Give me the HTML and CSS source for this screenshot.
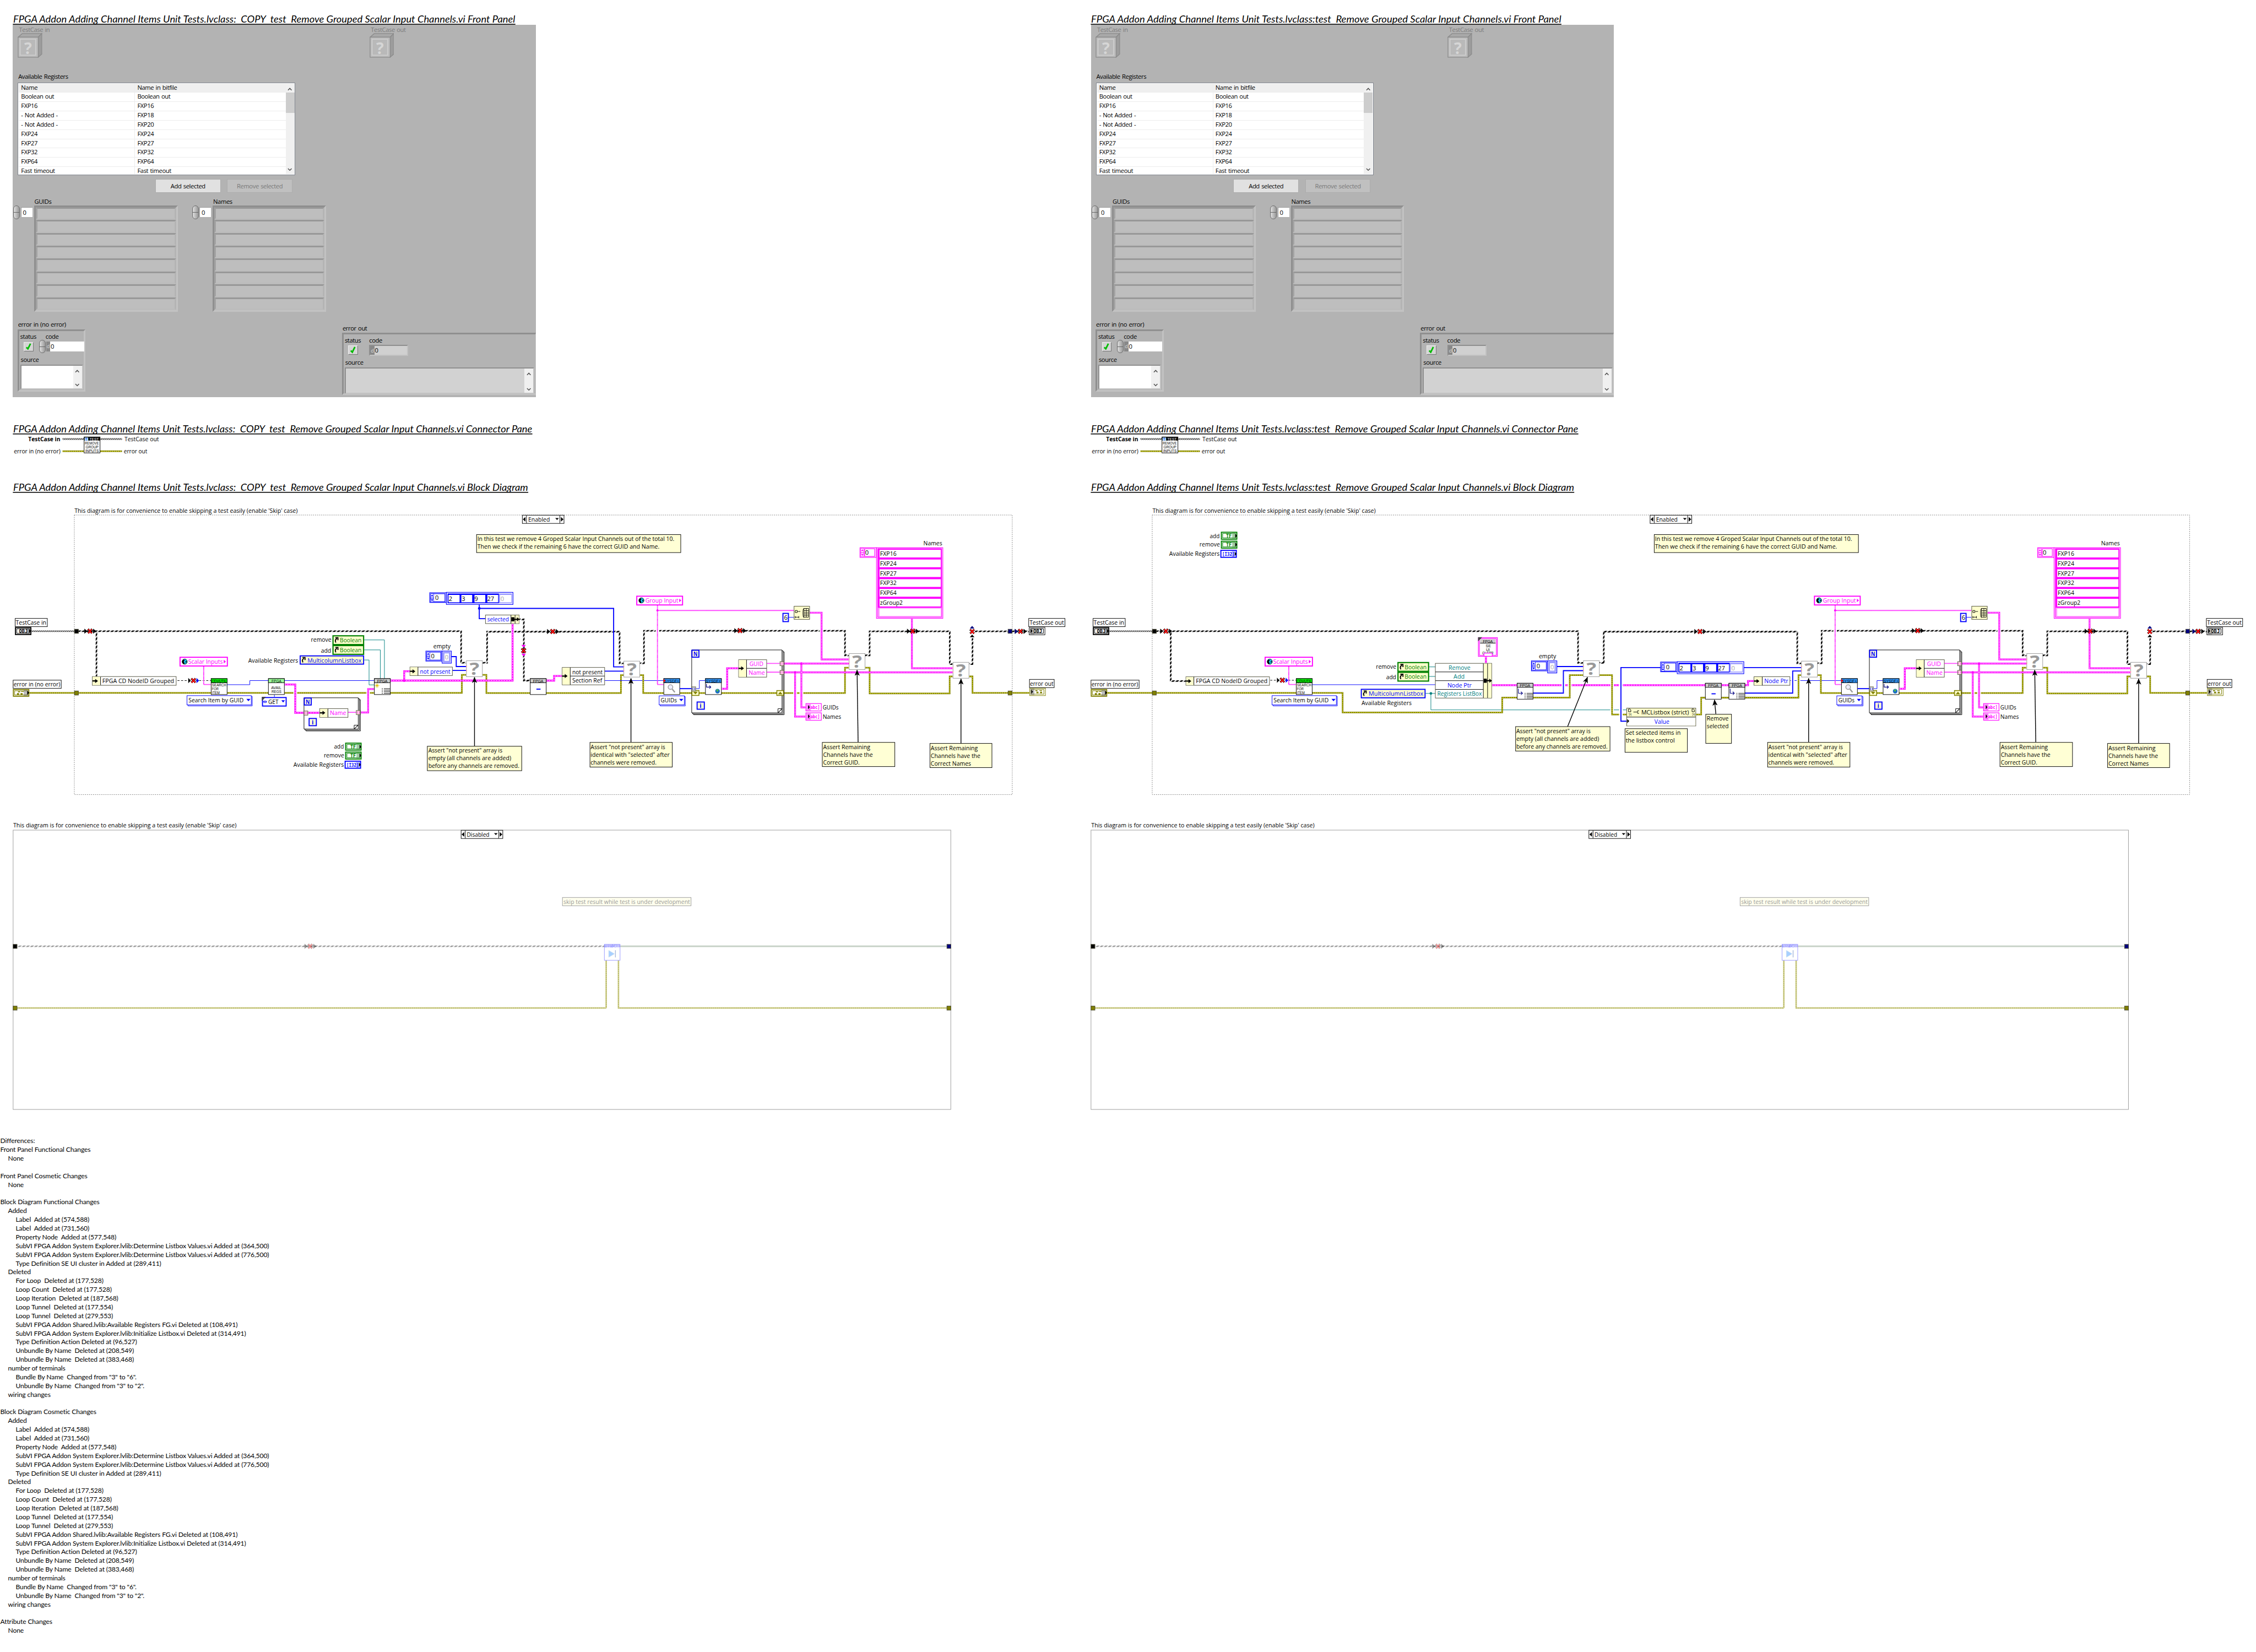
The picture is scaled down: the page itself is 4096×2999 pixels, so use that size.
FILE: index.html
```
<!DOCTYPE html>
<html lang="en">
<head>
<meta charset="utf-8">
<title>VI comparison report</title>
<link rel="stylesheet" href="styles.css">
</head>
<body>
<svg class="defs" width="0" height="0" aria-hidden="true">
  <defs>
    <pattern id="stripe" width="8" height="8" patternUnits="userSpaceOnUse"><path class="ink" d="M0 8L8 0H3L0 3zM3 8L8 3V8z"/></pattern>
    <pattern id="stripe-fine" width="4" height="4" patternUnits="userSpaceOnUse"><path class="ink" d="M0 4L4 0H2L0 2zM2 4L4 2V4z"/></pattern>
    <pattern id="stripe-off" width="8" height="8" patternUnits="userSpaceOnUse"><path class="off" d="M0 8L8 0H3L0 3zM3 8L8 3V8z"/></pattern>
    <marker id="head" viewBox="0 0 12 10" refX="11" refY="5" markerWidth="12" markerHeight="10" markerUnits="userSpaceOnUse" orient="auto"><path d="M0 0L12 5L0 10L3 5z"/></marker>

    <g id="x"><path class="x-edge" d="M-4-4L4 4M4-4L-4 4"/><path class="x-red" d="M-3.5-4L3.5 4M3.5-4L-3.5 4"/></g>
    <g id="coerce"><path class="ink" d="M-11-5L-5 0L-11 5zM6-5L12 0L6 5z"/><use href="#x"/></g>
    <g id="assert"><rect class="box grey-edge" x=".5" y=".5" width="31" height="31"/><text class="qmark" x="16" y="28" text-anchor="middle" textLength="19" lengthAdjust="spacingAndGlyphs">?</text><path class="salmon" d="M0 9q3 2 0 5zM0 17q3 2 0 5z"/></g>
    <g id="fpga"><rect class="box" x=".5" y=".5" width="31" height="31"/><rect class="hdr-grey" x=".5" y=".5" width="31" height="8"/><text class="px" x="6" y="7.6" textLength="20">FPGA</text></g>
    <g id="minus"><use href="#fpga"/><rect class="blue-fill" x="12.500" y="20" width="8" height="2"/></g>
    <g id="bars"><path class="ink-line" d="M15 20h2M19 20h12M15 23h2M19 23h12M15 26h2M19 26h12M15 29h2M19 29h12"/></g>
    <g id="values"><use href="#fpga"/><use href="#bars"/><path class="navy-line" d="M3 11v9h8M8 17l3 3l-3 3"/></g>
    <g id="sysdf"><rect class="box" x=".5" y=".5" width="31" height="31"/><rect class="hdr-blue" x=".5" y=".5" width="31" height="8"/><text class="px" x="1.500" y="7.600" textLength="29" lengthAdjust="spacingAndGlyphs">SYSDF+</text></g>
    <g id="globe"><circle class="globe" r="5"/><path class="ink" d="M-3-4q3 0 3 2l-2 2l2 3l-2 2q-5-3-1-9zM2-2l2 2l-2 3z"/></g>
    <g id="loop-n"><rect class="lbox" x="1" y="1" width="13.500" height="13.500"/><text class="bl b" x="3.800" y="12.300" textLength="8" lengthAdjust="spacingAndGlyphs">N</text></g>
    <g id="loop-i"><rect class="lbox" x="1" y="1" width="14" height="14"/><text class="bl b" x="6" y="12.800">i</text></g>
    <g id="arrow"><path class="ink" d="M0-1.200H5V-4L10.500 0L5 4V1.200H0z"/></g>
    <g id="pack"><path class="ink" d="M0-4h6v2.800H11V-4L16 0L11 4V1.200H6V4H0z"/></g>
    <g id="ref"><path class="ref-arrow" d="M3 12Q0 7 5 4M2 2.500h5v5"/></g>
    <g id="brackets"><rect class="tun" x=".5" y=".5" width="7.500" height="8"/><path class="tun-in" d="M3.500 2.500h-1v4h1M5.200 2.500h1v4h-1"/></g>
    <g id="step"><rect x="0" y="0" width="6" height="16" class="st"/><path d="M.5 5L3 1.500L5.500 5zM.5 11L3 14.500L5.500 11z" class="stp"/><path d="M0 7h6v.8H0zM0 8.600h6v.8H0z" class="stp"/></g>

    <g id="clusterTerm"><rect class="err-box" x="1" y="1" width="30" height="13"/><rect class="err-in" x="3.500" y="3.500" width="25" height="8"/><path class="olive" d="M8 8h4v3H8zM10 4.500h4v2h-4zM15 8h4v3h-4zM16 4.500h5v1h-5z"/></g>
    <g id="objTerm"><rect class="obj-box" x="1" y="1" width="30" height="13.500"/><rect class="obj-in" x="3.500" y="3.500" width="25" height="8.500"/><text class="mono" x="8" y="11.300" textLength="17" lengthAdjust="spacingAndGlyphs">OBJ</text></g>

    <g id="inputs">
      <rect class="box" x="29.500" y="1202.500" width="62.500" height="16"/><text class="t" x="30.500" y="1214.500" textLength="59.500" lengthAdjust="spacingAndGlyphs">TestCase in</text>
      <use href="#objTerm" x="29" y="1219.300"/><rect class="veil" x="50" y="1221" width="9" height="12"/><path class="ink" d="M56 1223l4 4l-4 4z"/>
      <rect class="box" x="25.500" y="1322.500" width="93.500" height="16"/><text class="t" x="26.500" y="1334.500" textLength="90.500" lengthAdjust="spacingAndGlyphs">error in (no error)</text>
      <use href="#clusterTerm" x="25" y="1339.700"/><rect class="veil" x="46" y="1341.500" width="9" height="12"/><path class="ink" d="M53 1343l4 4l-4 4z"/>
      <rect class="tunnel" x="144.800" y="1223.500" width="7.600" height="8"/><rect class="tunnel olive" x="144.800" y="1343.500" width="7.600" height="8"/>
    </g>

    <g id="search">
      <path class="str" d="M396 1296V1331H410"/>
      <rect class="gconst" x="350" y="1278" width="92" height="17"/><use href="#globe" x="359" y="1286.500"/><text class="t mg" x="366" y="1291" textLength="67" lengthAdjust="spacingAndGlyphs">Scalar Inputs</text><path class="mg" d="M435 1283l4 3.500l-4 3.500z"/>
      <rect class="box" x="410.500" y="1319.500" width="31" height="31"/><rect class="hdr-green" x="410.500" y="1319.500" width="31" height="8"/>
      <text class="px" x="411.500" y="1326.600" textLength="29" lengthAdjust="spacingAndGlyphs">CDVUTIL</text><text class="px" x="412" y="1334.600" textLength="28" lengthAdjust="spacingAndGlyphs">SEARCH</text><text class="px" x="412" y="1342.500" textLength="13" lengthAdjust="spacingAndGlyphs">FOR</text><text class="px" x="412" y="1350" textLength="15" lengthAdjust="spacingAndGlyphs">ITEM</text>
      <path class="ring-shadow" d="M488.500 1354h1.800v18.500H365.500V1371"/><rect class="ring" x="363.500" y="1352.600" width="125" height="18"/><text class="t" x="366.500" y="1366" textLength="107" lengthAdjust="spacingAndGlyphs">Search Item by GUID</text><path class="blue-fill" d="M479 1359h8l-4 4.500z"/>
    </g>

    <g id="terminals">
      <text class="t" x="649.500" y="1456" textLength="19" lengthAdjust="spacingAndGlyphs">add</text><text class="t" x="629.500" y="1473" textLength="39.500" lengthAdjust="spacingAndGlyphs">remove</text><text class="t" x="570.500" y="1491" textLength="98" lengthAdjust="spacingAndGlyphs">Available Registers</text>
      <rect class="tf" x="672" y="1445" width="30" height="13.500"/><rect class="tf-in" x="674.500" y="1447.500" width="25" height="8.500"/><text class="mono gr" x="681" y="1455.300" textLength="11" lengthAdjust="spacingAndGlyphs">TF</text><rect class="tf-veil" x="693" y="1446" width="8" height="12"/><path class="ink" d="M699 1448l3.500 4l-3.500 4z"/>
      <rect class="tf" x="672" y="1462.300" width="30" height="13.500"/><rect class="tf-in" x="674.500" y="1464.800" width="25" height="8.500"/><text class="mono gr" x="681" y="1472.600" textLength="11" lengthAdjust="spacingAndGlyphs">TF</text><rect class="tf-veil" x="693" y="1463.300" width="8" height="12"/><path class="ink" d="M699 1465l3.500 4l-3.500 4z"/>
      <rect class="lbox white" x="671" y="1480" width="30" height="13.700"/><rect class="i-veil" x="692" y="1481" width="8" height="12"/><text class="mono bl" x="673.500" y="1490.500" textLength="24" lengthAdjust="spacingAndGlyphs">[I32]</text><path class="ink" d="M698 1483l3.500 4l-3.500 4z"/>
    </g>

    <g id="empty">
      <text class="t" x="842.500" y="1260.700" textLength="33.500" lengthAdjust="spacingAndGlyphs">empty</text>
      <rect class="a-out" x="828" y="1266" width="31" height="19.500"/><rect class="a-out" x="830.500" y="1268" width="26.500" height="15.500"/><use href="#step" x="829.500" y="1268"/><text class="t" x="838" y="1280">0</text>
      <rect class="a-out" x="859.500" y="1266" width="18" height="23.500"/><rect class="a-dim" x="862.500" y="1269" width="12" height="17.500"/><text class="t dim" x="865" y="1282">0</text>
    </g>

    <g id="indices">
      <rect class="a-out" x="835.500" y="1152.500" width="32" height="19"/><rect class="a-out" x="838" y="1154.500" width="27" height="15.500"/><use href="#step" x="837" y="1154.500"/><text class="t" x="846" y="1166.500">0</text>
      <rect class="a-out" x="867.800" y="1151.800" width="129.500" height="23.500"/><rect class="a-band" x="870" y="1154" width="100" height="19"/><rect class="a-dimband" x="970" y="1154" width="25.500" height="19"/>
      <path class="white" d="M872 1156.700h21.500v14.600H872zM897 1156.700h21v14.600h-21zM922.500 1156.700h21v14.600h-21zM947.500 1156.700h21v14.600h-21zM972 1156.700h22v14.600h-22z"/>
      <text class="t" x="872.500" y="1168.500">2</text><text class="t" x="897.500" y="1168.500">3</text><text class="t" x="922.500" y="1168.500">9</text><text class="t" x="947.500" y="1168.500" textLength="13" lengthAdjust="spacingAndGlyphs">27</text><text class="t dim" x="973" y="1168.500">0</text>
    </g>

    <!-- Reads the remaining items back and asserts on their GUIDs and names -->
    <g id="verify">
      <path id="v-class" class="w-class" d="M1204.600 1228V1289.700H1212M1244 1289.700H1252V1226.500H1642.800V1274.300H1650M1682 1274.300H1690.700V1227.700H1846.500V1291.300H1852M1884 1291.300H1890.700V1227.700H2001"/>
      <path id="v-err" class="w-err" d="M1244 1312.700H1250.500V1347.500H1642.800V1298.300H1650M1682 1298.300H1690.700V1348.300H1846.300V1315.300H1852M1884 1315.300H1890.700V1347.300H2001"/><use href="#v-err" class="over-err"/>
      <path class="gap" d="M1597.300 1222V1231M1558 1343V1352M1545.800 1343V1352M1278.200 1222V1231"/>
      <path class="str" d="M1278.200 1177V1331H1290M1278.200 1187H1543"/><circle class="mgc" cx="1278.200" cy="1187" r="2"/>
      <path id="v-arr" class="w-arr" d="M1574 1191.300H1597.300V1282.300H1650M1524 1290.300H1650M1524 1307.300H1852M1558 1290V1375.300H1566M1545.800 1307V1393.300H1566M1772.900 1203V1299.300H1852"/><use href="#v-arr" class="over-arr"/>
      <circle class="mgc" cx="1558" cy="1290.300" r="2.500"/><circle class="mgc" cx="1545.800" cy="1307.300" r="2.500"/>
      <use href="#coerce" x="1438.700" y="1226.300"/><use href="#coerce" x="1774.400" y="1227.300"/><use href="#coerce" x="1984" y="1227.700"/><path class="navy" d="M1973 1223l6 4.700l-6 4.700z"/>
      <rect class="white" x="1886" y="1215" width="9" height="26"/><use href="#x" x="1890" y="1228"/><path class="navy" d="M1885.500 1222l4.500-5l4.500 5z"/><path class="ink" d="M1885.500 1239l4.500-5l4.500 5z"/>
      <rect class="tunnel navy" x="1959.900" y="1223.500" width="7.600" height="8"/><rect class="tunnel olive" x="1959.900" y="1343.500" width="7.600" height="8"/>

      <rect class="gconst" x="1238" y="1159.300" width="89" height="17"/><use href="#globe" x="1247" y="1167.500"/><text class="t mg" x="1254.600" y="1172.300" textLength="64" lengthAdjust="spacingAndGlyphs">Group Input</text><path class="mg" d="M1320.500 1164l4 3.500l-4 3.500z"/>
      <rect class="lbox white" x="1522.200" y="1192.700" width="10.600" height="16"/><text class="t" x="1524.300" y="1205">6</text><path class="blue" d="M1533.500 1200.300H1543"/>
      <rect class="node" x="1543.800" y="1178.800" width="30.200" height="25.500"/><path class="ink-line" d="M1546 1187h4v4h-4zM1551 1189h5M1546 1198v4M1546 1200h7M1553 1198v4M1563 1183q-2 0-2 9t2 9M1563 1183h9v17h-9zM1567.500 1183v17M1563 1187.500h9M1563 1192h9M1563 1196h9"/>

      <use href="#assert" x="1212.300" y="1285"/><use href="#assert" x="1650.300" y="1270.300"/><use href="#assert" x="1852.300" y="1287.300"/>

      <use href="#sysdf" x="1290" y="1319"/><circle class="lens" cx="1303.500" cy="1336" r="4.500"/><path class="handle" d="M1307 1340l5 6"/><path class="red" d="M1290 1320l4 3.500l-4 3.500z"/>
      <path class="ring-shadow" d="M1330.500 1354.500h1.800v18H1283.500V1371"/><rect class="ring" x="1281.500" y="1353" width="49" height="17.500"/><text class="t" x="1284.500" y="1366" textLength="31.500" lengthAdjust="spacingAndGlyphs">GUIDs</text><path class="blue-fill" d="M1320.500 1359h8l-4 4.500z"/>

      <path class="ink-line" d="M1344.800 1263.800H1520.300V1386H1344.800zM1520.300 1265.500h2.200V1388H1346.500v-2M1522.500 1267.500h2V1389.700H1348.500v-1.700M1512.500 1386V1378h7.800zM1520.300 1378l-7.800 8"/>
      <path class="blue thick" d="M1321.500 1339H1345"/><path class="blue" d="M1353 1339H1359.600V1323.300H1371"/>
      <use href="#loop-n" x="1344.300" y="1263.300"/><use href="#loop-i" x="1354.300" y="1364"/>
      <rect class="shift" x="1345.300" y="1342.700" width="13.600" height="9.500"/><path class="olive" d="M1347.500 1345h9l-4.500 5z"/>
      <rect class="shift" x="1510.300" y="1342.700" width="13" height="9.500"/><path class="olive" d="M1512.500 1350h9l-4.500-5z"/>
      <use href="#brackets" class="bl" x="1344.500" y="1335"/>
      <use href="#sysdf" x="1371" y="1319"/><path class="navy-line" d="M1373.500 1330v6h8M1379 1333l3 3l-3 3"/><circle class="earth" cx="1395" cy="1344" r="4.500"/><path class="land" d="M1393 1341q3-2 4 1l-2 3q-3-1-2-4z"/>
      <path id="v-clu" class="w-clu" d="M1403 1339.300H1413.700V1299.300H1436"/><use href="#v-clu" class="over-clu"/>
      <rect class="box olive-edge" x="1436" y="1282.800" width="54.500" height="33.800"/><rect class="cap" x="1436.500" y="1283.300" width="14.500" height="32.800"/><path class="ink-line" d="M1451.400 1283v33.500M1451.400 1299.500h39"/><use href="#arrow" x="1436" y="1299.500"/>
      <text class="t mg" x="1457" y="1295" textLength="27" lengthAdjust="spacingAndGlyphs">GUID</text><text class="t mg" x="1455.500" y="1312" textLength="31.500" lengthAdjust="spacingAndGlyphs">Name</text>
      <path class="str" d="M1491 1290H1516M1491 1307H1516"/><use href="#brackets" class="mgs" x="1516" y="1286"/><use href="#brackets" class="mgs" x="1516" y="1303"/>

      <rect class="abc" x="1566.800" y="1368" width="30" height="14.400"/><rect class="mg-veil" x="1567.500" y="1369" width="9" height="12.500"/><text class="mono mg" x="1571" y="1379" textLength="23" lengthAdjust="spacingAndGlyphs">[abc]</text><path class="ink" d="M1571 1371l3.500 4l-3.500 4z"/><text class="t" x="1599.400" y="1380" textLength="31" lengthAdjust="spacingAndGlyphs">GUIDs</text>
      <rect class="abc" x="1566.800" y="1386" width="30" height="14.400"/><rect class="mg-veil" x="1567.500" y="1387" width="9" height="12.500"/><text class="mono mg" x="1571" y="1397" textLength="23" lengthAdjust="spacingAndGlyphs">[abc]</text><path class="ink" d="M1571 1389l3.500 4l-3.500 4z"/><text class="t" x="1599.400" y="1397.300" textLength="36" lengthAdjust="spacingAndGlyphs">Names</text>

      <text class="t" x="1795.300" y="1060" textLength="36.500" lengthAdjust="spacingAndGlyphs">Names</text>
      <rect class="s-out" x="1672" y="1065" width="31.500" height="19"/><rect class="s-out" x="1681" y="1067" width="19.500" height="15"/><g class="pink-step"><use href="#step" x="1673.500" y="1066.500"/></g><text class="t" x="1682" y="1079">0</text>
      <rect class="s-out" x="1704" y="1065" width="129" height="137.300"/><rect class="mg" x="1705.800" y="1066.300" width="125.500" height="115"/><rect class="s-dim" x="1706.300" y="1181.300" width="124.500" height="19"/>
      <path class="white" d="M1710 1069h119v15H1710zM1710 1088h119v15H1710zM1710 1107.100h119v15H1710zM1710 1126.200h119v15H1710zM1710 1145.300h119v15H1710zM1710 1164.300h119v15H1710zM1710 1183.300h119v14.500H1710z"/>
      <text class="t" x="1711" y="1081" textLength="32" lengthAdjust="spacingAndGlyphs">FXP16</text><text class="t" x="1711" y="1100" textLength="32" lengthAdjust="spacingAndGlyphs">FXP24</text><text class="t" x="1711" y="1119" textLength="32" lengthAdjust="spacingAndGlyphs">FXP27</text><text class="t" x="1711" y="1138" textLength="32" lengthAdjust="spacingAndGlyphs">FXP32</text><text class="t" x="1711" y="1157" textLength="32" lengthAdjust="spacingAndGlyphs">FXP64</text><text class="t" x="1711" y="1176.300" textLength="44" lengthAdjust="spacingAndGlyphs">zGroup2</text>

      <rect class="box" x="2000" y="1202.500" width="70.500" height="16"/><text class="t" x="2001.500" y="1214.500" textLength="67" lengthAdjust="spacingAndGlyphs">TestCase out</text>
      <rect class="box" x="2001" y="1220" width="30.500" height="14.400"/><rect class="obj-in" x="2004" y="1222.700" width="24.500" height="8.800"/><text class="mono" x="2009" y="1230.800" textLength="17" lengthAdjust="spacingAndGlyphs">OBJ</text><rect class="veil" x="2002" y="1221" width="9" height="12.500"/><path class="ink" d="M2004 1223l3.500 4l-3.500 4z"/>
      <rect class="box" x="2001.500" y="1321" width="48" height="16"/><text class="t" x="2002.500" y="1333" textLength="45.500" lengthAdjust="spacingAndGlyphs">error out</text>
      <rect class="err-in" x="2002" y="1338.200" width="30.500" height="14.300"/><rect class="err-in" x="2004.500" y="1340.700" width="25" height="9"/><path class="olive" d="M2015 1345h4v3h-4zM2013 1342h4v2h-4zM2022 1345h4v3h-4zM2021 1342h5v1.500h-5z"/><rect class="veil" x="2003" y="1339" width="8" height="12.500"/><path class="ink" d="M2005 1341l3.500 4l-3.500 4z"/>

      <rect class="note" x="926.500" y="1039.500" width="397" height="35"/><text class="t" x="928" y="1052" textLength="383" lengthAdjust="spacingAndGlyphs">In this test we remove 4 Groped Scalar Input Channels out of the total 10.</text><text class="t" x="928" y="1067" textLength="354" lengthAdjust="spacingAndGlyphs">Then we check if the remaining 6 have the correct GUID and Name.</text>
      <rect class="note" x="1147" y="1443.500" width="160" height="48"/><text class="t" x="1148.300" y="1456.300" textLength="145" lengthAdjust="spacingAndGlyphs">Assert "not present" array is</text><text class="t" x="1148.300" y="1471.300" textLength="153.500" lengthAdjust="spacingAndGlyphs">identical with "selected" after</text><text class="t" x="1148.300" y="1486.300" textLength="128" lengthAdjust="spacingAndGlyphs">channels were removed.</text>
      <path class="lead" d="M1226.700 1443V1319"/>
      <rect class="note" x="1598.700" y="1443.500" width="141" height="47"/><text class="t" x="1600.300" y="1456.300" textLength="91.500" lengthAdjust="spacingAndGlyphs">Assert Remaining</text><text class="t" x="1600.300" y="1471.300" textLength="96.500" lengthAdjust="spacingAndGlyphs">Channels have the</text><text class="t" x="1600.300" y="1486.300" textLength="71" lengthAdjust="spacingAndGlyphs">Correct GUID.</text>
      <path class="lead" d="M1668.300 1443L1666.300 1303"/>
      <rect class="note" x="1808" y="1445.500" width="120.500" height="47"/><text class="t" x="1809.500" y="1458.300" textLength="91.500" lengthAdjust="spacingAndGlyphs">Assert Remaining</text><text class="t" x="1809.500" y="1473.300" textLength="96.500" lengthAdjust="spacingAndGlyphs">Channels have the</text><text class="t" x="1809.500" y="1488.300" textLength="78.500" lengthAdjust="spacingAndGlyphs">Correct Names</text>
      <path class="lead" d="M1868.300 1445V1320"/>
    </g>

    <g id="selector"><rect class="box" x="-40.500" y=".5" width="81" height="16"/><path class="ink-line" d="M-32.500 1v15M32.500 1v15"/><path class="ink" d="M-34.500 4v9l-5-4.500zM34.500 4v9l5-4.500zM23.500 6h7l-3.500 4z"/></g>

    <!-- Right-hand end of the case that is switched off -->
    <g id="skipped">
      <rect class="note faded" x="1093.500" y="1744.500" width="250" height="16"/><text class="t faint" x="1095.500" y="1756.500" textLength="246" lengthAdjust="spacingAndGlyphs">skip test result while test is under development</text>
      <path class="off-obj" d="M1205.500 1839.300H1841"/><path class="off-core" d="M1205.500 1839.300H1841"/>
      <path id="s-err" class="w-off" d="M1178.500 1867V1959.300M1202.400 1867V1959.300H1841"/><use href="#s-err" class="over-off"/>
      <rect class="skip-edge" x="1175" y="1835.500" width="30.500" height="31"/><rect class="skip-hdr" x="1175" y="1835.500" width="30.500" height="6"/><text class="px wh" x="1176" y="1841.500" textLength="29" lengthAdjust="spacingAndGlyphs">TEST CASE</text>
      <path class="skip-play" d="M1183.500 1847.500v13l11-6.500z"/><path class="skip-bar" d="M1196.500 1847v14"/>
      <rect class="tunnel navy" x="1841" y="1835.500" width="7.600" height="8"/><rect class="tunnel olive" x="1841" y="1955.500" width="7.600" height="8"/>
    </g>

    <g id="pane">
      <text class="t b" x="54.800" y="857.300" textLength="62.500" lengthAdjust="spacingAndGlyphs">TestCase in</text><text class="t" x="242" y="857.300" textLength="67" lengthAdjust="spacingAndGlyphs">TestCase out</text>
      <text class="t" x="27" y="881.700" textLength="90.500" lengthAdjust="spacingAndGlyphs">error in (no error)</text><text class="t" x="240.700" y="881.700" textLength="45.500" lengthAdjust="spacingAndGlyphs">error out</text>
      <path class="w-fine" d="M121.500 853.500H237.300"/><path id="p-err" class="w-err" d="M121.500 877.300H237.300"/><use href="#p-err" class="over-err"/>
      <rect class="box" x="163.500" y="849.500" width="31" height="31"/><rect class="ink" x="163.500" y="849.500" width="31" height="7"/><rect class="sky" x="164.500" y="850.500" width="7" height="6"/><text class="px bl" x="165.500" y="856.500">T</text><text class="px wh" x="174" y="856.200" textLength="18" lengthAdjust="spacingAndGlyphs">TEST</text>
      <text class="px" x="165" y="864.700" textLength="27" lengthAdjust="spacingAndGlyphs">REMOVE</text><text class="px" x="166.500" y="871.700" textLength="25" lengthAdjust="spacingAndGlyphs">GROUP</text><text class="px" x="166" y="878.800" textLength="26" lengthAdjust="spacingAndGlyphs">INPUTS</text>
    </g>
  </defs>
</svg>

<main class="report">
  <div class="columns">
    <section class="vi vi-copy">
      <h2 class="title first"><svg width="1090" height="34"><text x="25.700" y="28.800" textLength="976" lengthAdjust="spacingAndGlyphs">FPGA Addon Adding Channel Items Unit Tests.lvclass:  COPY  test  Remove Grouped Scalar Input Channels.vi Front Panel</text><rect x="25" y="31.300" width="977" height="1.700"/></svg></h2>
      <div class="panel">
        <div class="obj obj-in-p"><span class="cap-t">TestCase in</span><svg class="cube" width="48" height="48"><path class="cube-top" d="M1 8L9 1H47L40 8z"/><path class="cube-side" d="M40 8L47 1V41L40 47z"/><rect class="cube-face" x="1" y="8" width="39" height="39"/><rect class="cube-in" x="5" y="12" width="30" height="31"/><text x="20" y="41" text-anchor="middle">?</text></svg></div>
        <div class="obj obj-out-p"><span class="cap-t">TestCase out</span><svg class="cube" width="48" height="48"><path class="cube-top" d="M1 8L9 1H47L40 8z"/><path class="cube-side" d="M40 8L47 1V41L40 47z"/><rect class="cube-face" x="1" y="8" width="39" height="39"/><rect class="cube-in" x="5" y="12" width="30" height="31"/><text x="20" y="41" text-anchor="middle">?</text></svg></div>
        <div class="registers"><span class="lab">Available Registers</span>
          <div class="listbox"><div class="rows"><div class="row head"><span>Name</span><span>Name in bitfile</span></div><div class="row"><span>Boolean out</span><span>Boolean out</span></div><div class="row"><span>FXP16</span><span>FXP16</span></div><div class="row"><span>- Not Added -</span><span>FXP18</span></div><div class="row"><span>- Not Added -</span><span>FXP20</span></div><div class="row"><span>FXP24</span><span>FXP24</span></div><div class="row"><span>FXP27</span><span>FXP27</span></div><div class="row"><span>FXP32</span><span>FXP32</span></div><div class="row"><span>FXP64</span><span>FXP64</span></div><div class="row"><span>Fast timeout</span><span>Fast timeout</span></div></div>
            <div class="scroll"><svg width="9" height="6"><path d="M1 5L4.500 1.500L8 5"/></svg><i class="thumb"></i><svg width="9" height="6"><path d="M1 1L4.500 4.500L8 1"/></svg></div></div>
          <div class="buttons"><span class="btn">Add selected</span><span class="btn off-btn">Remove selected</span></div>
        </div>
        <div class="array guids"><span class="lab">GUIDs</span><div class="arr"><i class="spin"></i><span class="num">0</span><div class="cells"><i></i><i></i><i></i><i></i><i></i><i></i><i></i><i></i></div></div></div>
        <div class="array names"><span class="lab">Names</span><div class="arr"><i class="spin"></i><span class="num">0</span><div class="cells"><i></i><i></i><i></i><i></i><i></i><i></i><i></i><i></i></div></div></div>
        <div class="error err-in-p"><span class="lab">error in (no error)</span><div class="cluster"><div class="pair"><div><span class="lab">status</span><b class="led"><svg width="12" height="13"><path d="M2 8l3 3L10 1"/></svg></b></div><div class="code"><span class="lab">code</span><div class="numrow"><i class="spin"></i><span class="radix">d</span><span class="num">0</span></div></div></div><span class="lab src">source</span><div class="area"><div class="scroll"><svg width="9" height="6"><path d="M1 5L4.500 1.500L8 5"/></svg><svg width="9" height="6"><path d="M1 1L4.500 4.500L8 1"/></svg></div></div></div></div>
        <div class="error err-out-p"><span class="lab">error out</span><div class="cluster"><div class="pair"><div><span class="lab">status</span><b class="led"><svg width="12" height="13"><path d="M2 8l3 3L10 1"/></svg></b></div><div class="code"><span class="lab">code</span><div class="numrow"><span class="radix">d</span><span class="num">0</span></div></div></div><span class="lab src">source</span><div class="area"><div class="scroll"><svg width="9" height="6"><path d="M1 5L4.500 1.500L8 5"/></svg><svg width="9" height="6"><path d="M1 1L4.500 4.500L8 1"/></svg></div></div></div></div>
      </div>
      <h2 class="title second"><svg width="1090" height="34"><text x="25.700" y="29.300" textLength="1009" lengthAdjust="spacingAndGlyphs">FPGA Addon Adding Channel Items Unit Tests.lvclass:  COPY  test  Remove Grouped Scalar Input Channels.vi Connector Pane</text><rect x="25" y="31" width="1010" height="1.700"/></svg></h2>
      <svg class="drawing" width="400" height="44" viewBox="0 846 400 44"><use href="#pane"/></svg>
      <h2 class="title third"><svg width="1090" height="34"><text x="25.700" y="29.300" textLength="1001" lengthAdjust="spacingAndGlyphs">FPGA Addon Adding Channel Items Unit Tests.lvclass:  COPY  test  Remove Grouped Scalar Input Channels.vi Block Diagram</text><rect x="25" y="31" width="1002" height="1.700"/></svg></h2>

      <svg class="drawing" width="2096" height="601.300" viewBox="0 958.700 2096 601.300">
        <text class="t" x="144.700" y="997" textLength="434" lengthAdjust="spacingAndGlyphs">This diagram is for convenience to enable skipping a test easily (enable 'Skip' case)</text>
        <rect class="frame" x="144.500" y="1001.500" width="1823.500" height="543.500"/>
        <use href="#selector" x="1056" y="1001.300"/><text class="t" x="1027" y="1014" textLength="42" lengthAdjust="spacingAndGlyphs">Enabled</text>
        <path class="w-fine" d="M61 1227.300H145"/>
        <path class="w-class" d="M152 1227.300H896.500V1288.700H906M187.500 1227V1315M938 1288.700H947V1228.300H1204.600M1009.500 1204.300H1018.400V1323.300H1030.500"/>
        <path id="l-err" class="w-err" d="M57 1347.300H897.900V1312.300H906M938 1312.300H945.600V1347.500H1207.200V1312.700H1212"/><use href="#l-err" class="over-err"/>
        <path class="dash" d="M345 1323.300H410"/>
        <path class="gap" d="M574 1343V1352M717.500 1319V1328M715.700 1343V1352M996.500 1223V1233"/>
        <path class="blue" d="M442 1331.300H485.700V1323.300H727M533.500 1351V1355M1175.500 1323.300H1290"/>
        <path id="l-clu" class="w-clu" d="M553 1331H574V1386H621M759 1323.300H996.500V1212M785.800 1323V1305.300H797M1062 1323.300H1077.300V1314.300H1092"/><use href="#l-clu" class="over-clu"/><circle class="mgc" cx="785.800" cy="1323.500" r="2.500"/>
        <path id="l-arr" class="w-arr" d="M701 1385.300H715.700V1339.700H727"/><use href="#l-arr" class="over-arr"/>
        <path class="str" d="M677 1385H692.500"/>
        <path class="teal" d="M708 1244.300H747.400V1320M708 1263.700H739.400V1320M708 1283.300H717.500V1331.700H727.500"/>
        <path class="blue thick" d="M879.600 1303.700H906.500M877.800 1276.700H887V1296H906.500M931.800 1175V1203H943.500M931.800 1183H1193V1296.700H1212.500M1175.500 1305H1212.500"/><circle class="blue-fill" cx="931.800" cy="1183" r="2.600"/>
        <use href="#inputs"/>
        <use href="#verify"/>
        <use href="#search"/>
        <use href="#terminals"/>
        <use href="#empty"/>
        <use href="#indices"/>
        <use href="#coerce" x="175" y="1227.300"/><use href="#coerce" x="1074.600" y="1228"/><use href="#x" x="376" y="1323.300"/><path class="ink" d="M366 1318.300l5 5l-5 5z"/><path class="blue-fill" d="M382 1318.300l5 5l-5 5z"/>
        <use href="#x" x="1018" y="1265"/><path class="mg" d="M1013.500 1254h9l-4.500 5zM1013.500 1271h9l-4.500 5z"/>
        <rect class="box olive-edge" x="179.500" y="1315.500" width="163" height="17"/><rect class="cap" x="180" y="1316" width="15.500" height="16"/><path class="ink-line" d="M195.500 1316v16"/><use href="#arrow" x="180" y="1324"/><text class="t" x="199" y="1328.500" textLength="139.500" lengthAdjust="spacingAndGlyphs">FPGA CD NodeID Grouped</text>
        <rect class="box" x="521.800" y="1319.500" width="31" height="31"/><rect class="hdr-mint" x="521.800" y="1319.500" width="31" height="8"/><text class="px" x="528" y="1326.800" textLength="19" lengthAdjust="spacingAndGlyphs">FPGA</text><text class="px" x="527" y="1339.500" textLength="20" lengthAdjust="spacingAndGlyphs">AVAIL</text><text class="px" x="528" y="1347.500" textLength="19" lengthAdjust="spacingAndGlyphs">REGS</text>
        <rect class="lbox white" x="510.300" y="1356.300" width="46" height="16.500"/><path class="dark" d="M509 1355h8l-8 8z"/><path class="blue-fill" d="M511.500 1364.500l3-3v6zM519 1364.500l-3-3v6z"/><text class="t" x="521.400" y="1369" textLength="20" lengthAdjust="spacingAndGlyphs">GET</text><path class="blue-fill" d="M547 1361.500h7l-3.500 4.500z"/>
        <path class="ink-line" d="M591 1356.800H696.500V1417.500H591zM696.500 1358.500h2.200V1419.500H593v-2M698.700 1360.500h2V1421.300H595v-1.700M688.500 1417.500V1410h8zM696.500 1410l-8 7.500"/>
        <use href="#loop-n" x="590.600" y="1356.300"/><use href="#loop-i" x="600" y="1396"/><use href="#brackets" class="mgs" x="590.500" y="1382"/><use href="#brackets" class="mgs" x="692.200" y="1381"/>
        <rect class="box olive-edge" x="621.500" y="1377.800" width="55" height="17"/><rect class="cap" x="622" y="1378.300" width="15.500" height="16"/><path class="ink-line" d="M637.500 1378v16.500"/><use href="#arrow" x="622" y="1386"/><text class="t mg" x="641.500" y="1390.500" textLength="31.500" lengthAdjust="spacingAndGlyphs">Name</text>
        <rect class="refbox gr-edge" x="647.400" y="1236.300" width="59.500" height="17"/><use href="#ref" x="650" y="1237.500"/><text class="t gr" x="660.700" y="1249" textLength="42" lengthAdjust="spacingAndGlyphs">Boolean</text>
        <rect class="refbox gr-edge" x="647.400" y="1255.300" width="59.500" height="17"/><use href="#ref" x="650" y="1256.500"/><text class="t gr" x="660.700" y="1268" textLength="42" lengthAdjust="spacingAndGlyphs">Boolean</text>
        <rect class="refbox" x="583.600" y="1275.300" width="123.300" height="16"/><use href="#ref" x="586" y="1276"/><text class="t bl" x="597.800" y="1288" textLength="105" lengthAdjust="spacingAndGlyphs">MulticolumnListbox</text>
        <text class="t" x="604.500" y="1248" textLength="39.700" lengthAdjust="spacingAndGlyphs">remove</text><text class="t" x="624" y="1269" textLength="19.700" lengthAdjust="spacingAndGlyphs">add</text><text class="t" x="482.600" y="1289" textLength="97" lengthAdjust="spacingAndGlyphs">Available Registers</text>
        <use href="#fpga" x="727.300" y="1319"/><use href="#bars" x="727.300" y="1319"/><path class="spark" d="M728.500 1333h9M733 1328.500v9M730 1330l6 6M736 1330l-6 6"/>
        <rect class="box olive-edge" x="797" y="1297" width="82.500" height="16.500"/><rect class="cap" x="797.500" y="1297.500" width="15" height="15.500"/><path class="ink-line" d="M812.600 1297v16.500"/><use href="#arrow" x="797" y="1305.300"/><text class="t bl" x="816.600" y="1309.500" textLength="59" lengthAdjust="spacingAndGlyphs">not present</text>
        <use href="#assert" x="906.300" y="1284.300"/>
        <rect class="box olive-edge" x="943.800" y="1195.800" width="65.500" height="16.700"/><rect class="cap" x="993.500" y="1196.300" width="15.500" height="15.700"/><path class="ink-line" d="M993.400 1196v16.500M1001.400 1196v16.500"/><use href="#pack" x="994" y="1204.300"/><text class="t bl" x="947.400" y="1208.500" textLength="42" lengthAdjust="spacingAndGlyphs">selected</text>
        <use href="#minus" x="1030.400" y="1319"/>
        <rect class="box olive-edge" x="1093" y="1297.800" width="82.500" height="33.800"/><rect class="cap" x="1093.500" y="1298.300" width="15" height="32.800"/><path class="ink-line" d="M1108.600 1298v33.500M1108.600 1314.500h67"/><use href="#arrow" x="1093" y="1314.500"/><text class="t" x="1112.600" y="1310.500" textLength="59" lengthAdjust="spacingAndGlyphs">not present</text><text class="t" x="1112.600" y="1327.500" textLength="58" lengthAdjust="spacingAndGlyphs">Section Ref</text>
        <rect class="note" x="830.800" y="1451" width="183.500" height="47.500"/><text class="t" x="832.700" y="1463.500" textLength="144" lengthAdjust="spacingAndGlyphs">Assert "not present" array is</text><text class="t" x="832.700" y="1478.500" textLength="161" lengthAdjust="spacingAndGlyphs">empty (all channels are added)</text><text class="t" x="832.700" y="1493.500" textLength="177" lengthAdjust="spacingAndGlyphs">before any channels are removed.</text>
        <path class="lead" d="M922.500 1450.500V1317"/>
      </svg>

      <svg class="drawing" width="2096" height="640" viewBox="0 1560 2096 640">
        <text class="t" x="25.700" y="1608.500" textLength="434" lengthAdjust="spacingAndGlyphs">This diagram is for convenience to enable skipping a test easily (enable 'Skip' case)</text>
        <rect class="frame off-frame" x="25.500" y="1613.500" width="1823" height="543"/>
        <use href="#selector" x="937" y="1613.300"/><text class="t" x="907.500" y="1626" textLength="44" lengthAdjust="spacingAndGlyphs">Disabled</text>
        <path class="w-offclass" d="M33 1839.300H1175"/><path id="ld-err" class="w-off" d="M33 1959.300H1178.500"/><use href="#ld-err" class="over-off"/>
        <g class="half"><use href="#coerce" x="603" y="1839.300"/></g>
        <use href="#skipped"/><rect class="tunnel" x="25.500" y="1835.500" width="7.600" height="8"/><rect class="tunnel olive" x="25.500" y="1955.500" width="7.600" height="8"/>
      </svg>
    </section>

    <section class="vi vi-test">
      <h2 class="title first"><svg width="1090" height="34"><text x="25.700" y="28.800" textLength="914" lengthAdjust="spacingAndGlyphs">FPGA Addon Adding Channel Items Unit Tests.lvclass:test  Remove Grouped Scalar Input Channels.vi Front Panel</text><rect x="25" y="31.300" width="915" height="1.700"/></svg></h2>
      <div class="panel">
        <div class="obj obj-in-p"><span class="cap-t">TestCase in</span><svg class="cube" width="48" height="48"><path class="cube-top" d="M1 8L9 1H47L40 8z"/><path class="cube-side" d="M40 8L47 1V41L40 47z"/><rect class="cube-face" x="1" y="8" width="39" height="39"/><rect class="cube-in" x="5" y="12" width="30" height="31"/><text x="20" y="41" text-anchor="middle">?</text></svg></div>
        <div class="obj obj-out-p"><span class="cap-t">TestCase out</span><svg class="cube" width="48" height="48"><path class="cube-top" d="M1 8L9 1H47L40 8z"/><path class="cube-side" d="M40 8L47 1V41L40 47z"/><rect class="cube-face" x="1" y="8" width="39" height="39"/><rect class="cube-in" x="5" y="12" width="30" height="31"/><text x="20" y="41" text-anchor="middle">?</text></svg></div>
        <div class="registers"><span class="lab">Available Registers</span>
          <div class="listbox"><div class="rows"><div class="row head"><span>Name</span><span>Name in bitfile</span></div><div class="row"><span>Boolean out</span><span>Boolean out</span></div><div class="row"><span>FXP16</span><span>FXP16</span></div><div class="row"><span>- Not Added -</span><span>FXP18</span></div><div class="row"><span>- Not Added -</span><span>FXP20</span></div><div class="row"><span>FXP24</span><span>FXP24</span></div><div class="row"><span>FXP27</span><span>FXP27</span></div><div class="row"><span>FXP32</span><span>FXP32</span></div><div class="row"><span>FXP64</span><span>FXP64</span></div><div class="row"><span>Fast timeout</span><span>Fast timeout</span></div></div>
            <div class="scroll"><svg width="9" height="6"><path d="M1 5L4.500 1.500L8 5"/></svg><i class="thumb"></i><svg width="9" height="6"><path d="M1 1L4.500 4.500L8 1"/></svg></div></div>
          <div class="buttons"><span class="btn">Add selected</span><span class="btn off-btn">Remove selected</span></div>
        </div>
        <div class="array guids"><span class="lab">GUIDs</span><div class="arr"><i class="spin"></i><span class="num">0</span><div class="cells"><i></i><i></i><i></i><i></i><i></i><i></i><i></i><i></i></div></div></div>
        <div class="array names"><span class="lab">Names</span><div class="arr"><i class="spin"></i><span class="num">0</span><div class="cells"><i></i><i></i><i></i><i></i><i></i><i></i><i></i><i></i></div></div></div>
        <div class="error err-in-p"><span class="lab">error in (no error)</span><div class="cluster"><div class="pair"><div><span class="lab">status</span><b class="led"><svg width="12" height="13"><path d="M2 8l3 3L10 1"/></svg></b></div><div class="code"><span class="lab">code</span><div class="numrow"><i class="spin"></i><span class="radix">d</span><span class="num">0</span></div></div></div><span class="lab src">source</span><div class="area"><div class="scroll"><svg width="9" height="6"><path d="M1 5L4.500 1.500L8 5"/></svg><svg width="9" height="6"><path d="M1 1L4.500 4.500L8 1"/></svg></div></div></div></div>
        <div class="error err-out-p"><span class="lab">error out</span><div class="cluster"><div class="pair"><div><span class="lab">status</span><b class="led"><svg width="12" height="13"><path d="M2 8l3 3L10 1"/></svg></b></div><div class="code"><span class="lab">code</span><div class="numrow"><span class="radix">d</span><span class="num">0</span></div></div></div><span class="lab src">source</span><div class="area"><div class="scroll"><svg width="9" height="6"><path d="M1 5L4.500 1.500L8 5"/></svg><svg width="9" height="6"><path d="M1 1L4.500 4.500L8 1"/></svg></div></div></div></div>
      </div>
      <h2 class="title second"><svg width="1090" height="34"><text x="25.700" y="29.300" textLength="947" lengthAdjust="spacingAndGlyphs">FPGA Addon Adding Channel Items Unit Tests.lvclass:test  Remove Grouped Scalar Input Channels.vi Connector Pane</text><rect x="25" y="31" width="948" height="1.700"/></svg></h2>
      <svg class="drawing" width="400" height="44" viewBox="0 846 400 44"><use href="#pane"/></svg>
      <h2 class="title third"><svg width="1090" height="34"><text x="25.700" y="29.300" textLength="939" lengthAdjust="spacingAndGlyphs">FPGA Addon Adding Channel Items Unit Tests.lvclass:test  Remove Grouped Scalar Input Channels.vi Block Diagram</text><rect x="25" y="31" width="940" height="1.700"/></svg></h2>

      <svg class="drawing" width="2290" height="601.300" viewBox="2096 958.700 2290 601.300">
        <text class="t" x="2241" y="997" textLength="434" lengthAdjust="spacingAndGlyphs">This diagram is for convenience to enable skipping a test easily (enable 'Skip' case)</text>
        <rect class="frame" x="2240.500" y="1001.500" width="2017" height="543.500"/>
        <use href="#selector" x="3249" y="1001.300"/><text class="t" x="3220" y="1014" textLength="42" lengthAdjust="spacingAndGlyphs">Enabled</text>
        <path class="w-fine" d="M2157 1227.300H2241"/>
        <path class="w-class" d="M2248 1227.300H3068.400V1289H3078M2276.500 1227V1324.300H2306M3110 1289H3118.400V1228.300H3494.600"/>
        <path class="blue" d="M2551 1331.300H2791M3480 1323.300H3580"/>
        <path id="r-clu" class="w-clu" d="M2889.300 1277V1290M2901 1332.300H3398.800V1324.300H3410.500"/><use href="#r-clu" class="over-clu"/>
        <path class="teal" d="M2778.500 1296.700H2791M2778.500 1315.300H2791M2772 1348.300H2791M2782.300 1348.300V1380.300H3162.500"/><circle class="teal-fill" cx="2782.300" cy="1348.300" r="2.600"/>
        <path class="gap" d="M3039.900 1328V1337M3052.300 1328V1337M3134.500 1328V1337M3134.500 1376V1385M3151.800 1328V1337M3151.800 1376V1394M3485.700 1319V1328M3497 1319V1328"/>
        <path id="r-err" class="w-err" d="M2153 1347.300H2610.700V1385.300H2921V1356.300H3052.300V1312.700H3078.500M3110 1312.700H3134.500V1389.300H3162.500M3297.500 1389.300H3307.800V1356.500H3497V1312.700H3502"/><use href="#r-err" class="over-err"/>
        <path class="gap" d="M3151.800 1385V1394"/>
        <path class="dash" d="M2470 1322.700H2520"/>
        <path class="blue thick" d="M2980.500 1347.700H3039.900V1304H3078.500M3027.500 1296H3078.500M3229 1298H3151.800V1402.300H3162.500M3390 1298H3502.500M3392.500 1347.700H3485.700V1304.700H3502.500"/>
        <use href="#inputs" x="2096"/>
        <use href="#verify" x="2290"/>
        <use href="#search" x="2110"/>
        <use href="#terminals" x="1703" y="-410"/>
        <use href="#empty" x="2149.700" y="19"/>
        <use href="#indices" x="2393.400" y="134.700"/>
        <use href="#coerce" x="2267" y="1227.300"/><use href="#coerce" x="3305.500" y="1228"/><use href="#x" x="2493.500" y="1322.700"/><path class="ink" d="M2483 1317.700l5 5l-5 5z"/><path class="blue-fill" d="M2500 1317.700l5 5l-5 5z"/>
        <rect class="box olive-edge" x="2306" y="1316" width="162.500" height="16.500"/><rect class="cap" x="2306.500" y="1316.500" width="15" height="15.500"/><path class="ink-line" d="M2321.500 1316v16"/><use href="#arrow" x="2306" y="1324.300"/><text class="t" x="2325.500" y="1328.500" textLength="139" lengthAdjust="spacingAndGlyphs">FPGA CD NodeID Grouped</text>
        <rect class="refbox gr-edge" x="2718.300" y="1288.300" width="59.500" height="17"/><use href="#ref" x="2721" y="1289.500"/><text class="t gr" x="2731.300" y="1301" textLength="42.500" lengthAdjust="spacingAndGlyphs">Boolean</text>
        <rect class="refbox gr-edge" x="2718.300" y="1307.300" width="59.500" height="17"/><use href="#ref" x="2721" y="1308.500"/><text class="t gr" x="2731.300" y="1320" textLength="42.500" lengthAdjust="spacingAndGlyphs">Boolean</text>
        <rect class="refbox" x="2647" y="1340.300" width="124" height="16.500"/><use href="#ref" x="2649.500" y="1341"/><text class="t bl" x="2661.500" y="1353" textLength="106" lengthAdjust="spacingAndGlyphs">MulticolumnListbox</text>
        <text class="t" x="2675.500" y="1300" textLength="39.500" lengthAdjust="spacingAndGlyphs">remove</text><text class="t" x="2695.400" y="1321" textLength="19.300" lengthAdjust="spacingAndGlyphs">add</text><text class="t" x="2647.400" y="1371" textLength="97.500" lengthAdjust="spacingAndGlyphs">Available Registers</text>
        <rect class="box olive-edge" x="2791" y="1289.800" width="109.500" height="67.500"/><rect class="cap" x="2884.500" y="1290.300" width="15.500" height="66.500"/><path class="ink-line" d="M2884.300 1290v67M2892.500 1290v67M2791 1306.500h93M2791 1323.500h93M2791 1340.500h93"/><use href="#pack" x="2885" y="1323.500"/>
        <text class="t te" x="2816.700" y="1302" textLength="42.500" lengthAdjust="spacingAndGlyphs">Remove</text><text class="t te" x="2826.400" y="1319.300" textLength="21.500" lengthAdjust="spacingAndGlyphs">Add</text><text class="t bl" x="2814.400" y="1336.300" textLength="47" lengthAdjust="spacingAndGlyphs">Node Ptr</text><text class="t te" x="2794.700" y="1353.300" textLength="86.500" lengthAdjust="spacingAndGlyphs">Registers ListBox</text>
        <rect class="s-out" x="2874.600" y="1239.800" width="37" height="36.500"/><rect class="s-out" x="2876.600" y="1241.800" width="33" height="32.500"/><rect class="hdr-plain" x="2878" y="1243" width="30" height="7.500"/><path class="ink-line" d="M2878 1250.500h30"/><path class="dark" d="M2874 1239h8l-8 8z"/><text class="px" x="2883.500" y="1249.500" textLength="19" lengthAdjust="spacingAndGlyphs">FPGA</text><text class="px" x="2889" y="1258.500">SE</text><text class="px" x="2889.500" y="1265.500">UI</text><text class="px" x="2882" y="1272.500" textLength="22" lengthAdjust="spacingAndGlyphs">CLSTR</text><rect class="s-out" x="2885.500" y="1270" width="16" height="6"/>
        <use href="#values" x="2949.400" y="1328"/>
        <use href="#assert" x="3078.300" y="1284.300"/>
        <rect class="node" x="3163" y="1376.800" width="134.300" height="34.700"/><rect class="white" x="3163.800" y="1394.500" width="132.800" height="16.500"/><path class="ink-line" d="M3163 1394.300h134"/><path class="ink-line" d="M3166.500 1378.500h3l1.500 2v3.500h-4.500zM3290 1378.500h3l1.500 2v3.500h-4.500zM3176 1384.500h7M3187 1382h-3v5h3"/><text class="px" x="3166" y="1392.500">?!</text><text class="px" x="3289.500" y="1392.500">?!</text><path class="ink" d="M3164 1398l4 4l-4 4z"/>
        <text class="t" x="3191.400" y="1389" textLength="92.500" lengthAdjust="spacingAndGlyphs">MCListbox (strict)</text><text class="t bl" x="3217" y="1407" textLength="29" lengthAdjust="spacingAndGlyphs">Value</text>
        <use href="#minus" x="3315.400" y="1328"/><use href="#values" x="3361.200" y="1328"/>
        <rect class="box olive-edge" x="3410.500" y="1315.800" width="69.800" height="16.700"/><rect class="cap" x="3411" y="1316.300" width="15" height="15.700"/><path class="ink-line" d="M3426.500 1316v16.500"/><use href="#arrow" x="3410.500" y="1324.300"/><text class="t bl" x="3430.600" y="1328.500" textLength="46.500" lengthAdjust="spacingAndGlyphs">Node Ptr</text>
        <rect class="note" x="2947" y="1412.800" width="183.500" height="47.500"/><text class="t" x="2948.300" y="1425.300" textLength="144.500" lengthAdjust="spacingAndGlyphs">Assert "not present" array is</text><text class="t" x="2948.300" y="1440.300" textLength="161" lengthAdjust="spacingAndGlyphs">empty (all channels are added)</text><text class="t" x="2948.300" y="1455.300" textLength="177.500" lengthAdjust="spacingAndGlyphs">before any channels are removed.</text>
        <path class="lead" d="M3048.200 1412.500L3086.700 1317"/>
        <rect class="note" x="3159.700" y="1416.800" width="121.300" height="46"/><text class="t" x="3161.300" y="1429.300" textLength="106.500" lengthAdjust="spacingAndGlyphs">Set selected items in</text><text class="t" x="3161.300" y="1444.300" textLength="95" lengthAdjust="spacingAndGlyphs">the listbox control</text>
        <rect class="note" x="3316.700" y="1388.800" width="50" height="56.500"/><text class="t" x="3318.700" y="1401.300" textLength="42.500" lengthAdjust="spacingAndGlyphs">Remove</text><text class="t" x="3318.700" y="1416.300" textLength="42.500" lengthAdjust="spacingAndGlyphs">selected</text>
        <path class="lead" d="M3336.300 1388L3333.700 1361"/>
      </svg>

      <svg class="drawing" width="2290" height="640" viewBox="2096 1560 2290 640">
        <text class="t" x="2122" y="1608.500" textLength="434" lengthAdjust="spacingAndGlyphs">This diagram is for convenience to enable skipping a test easily (enable 'Skip' case)</text>
        <rect class="frame off-frame" x="2121.500" y="1613.500" width="2017" height="543"/>
        <use href="#selector" x="3130" y="1613.300"/><text class="t" x="3100.500" y="1626" textLength="44" lengthAdjust="spacingAndGlyphs">Disabled</text>
        <path class="w-offclass" d="M2129 1839.300H3465"/><path id="rd-err" class="w-off" d="M2129 1959.300H3468.500"/><use href="#rd-err" class="over-off"/>
        <g class="half"><use href="#coerce" x="2796" y="1839.300"/></g>
        <use href="#skipped" x="2290"/><rect class="tunnel" x="2121.500" y="1835.500" width="7.600" height="8"/><rect class="tunnel olive" x="2121.500" y="1955.500" width="7.600" height="8"/>
      </svg>
    </section>
  </div>

<pre class="differences">Differences:
Front Panel Functional Changes
<span class="l1">None</span>

Front Panel Cosmetic Changes
<span class="l1">None</span>

Block Diagram Functional Changes
<span class="l1">Added</span>
<span class="l2">Label  Added at (574,588)
Label  Added at (731,560)
Property Node  Added at (577,548)
SubVI FPGA Addon System Explorer.lvlib:Determine Listbox Values.vi Added at (364,500)
SubVI FPGA Addon System Explorer.lvlib:Determine Listbox Values.vi Added at (776,500)
Type Definition SE UI cluster in Added at (289,411)</span>
<span class="l1">Deleted</span>
<span class="l2">For Loop  Deleted at (177,528)
Loop Count  Deleted at (177,528)
Loop Iteration  Deleted at (187,568)
Loop Tunnel  Deleted at (177,554)
Loop Tunnel  Deleted at (279,553)
SubVI FPGA Addon Shared.lvlib:Available Registers FG.vi Deleted at (108,491)
SubVI FPGA Addon System Explorer.lvlib:Initialize Listbox.vi Deleted at (314,491)
Type Definition Action Deleted at (96,527)
Unbundle By Name  Deleted at (208,549)
Unbundle By Name  Deleted at (383,468)</span>
<span class="l1">number of terminals</span>
<span class="l2">Bundle By Name  Changed from "3" to "6".
Unbundle By Name  Changed from "3" to "2".</span>
<span class="l1">wiring changes</span>

Block Diagram Cosmetic Changes
<span class="l1">Added</span>
<span class="l2">Label  Added at (574,588)
Label  Added at (731,560)
Property Node  Added at (577,548)
SubVI FPGA Addon System Explorer.lvlib:Determine Listbox Values.vi Added at (364,500)
SubVI FPGA Addon System Explorer.lvlib:Determine Listbox Values.vi Added at (776,500)
Type Definition SE UI cluster in Added at (289,411)</span>
<span class="l1">Deleted</span>
<span class="l2">For Loop  Deleted at (177,528)
Loop Count  Deleted at (177,528)
Loop Iteration  Deleted at (187,568)
Loop Tunnel  Deleted at (177,554)
Loop Tunnel  Deleted at (279,553)
SubVI FPGA Addon Shared.lvlib:Available Registers FG.vi Deleted at (108,491)
SubVI FPGA Addon System Explorer.lvlib:Initialize Listbox.vi Deleted at (314,491)
Type Definition Action Deleted at (96,527)
Unbundle By Name  Deleted at (208,549)
Unbundle By Name  Deleted at (383,468)</span>
<span class="l1">number of terminals</span>
<span class="l2">Bundle By Name  Changed from "3" to "6".
Unbundle By Name  Changed from "3" to "2".</span>
<span class="l1">wiring changes</span>

Attribute Changes
<span class="l1">None</span></pre>
</main>
</body>
</html>
```
FILE: styles.css
```
* { box-sizing: border-box; }
html { background: #fff; overflow: hidden; }
body { margin: 0; color: #000; font: 12px/15px "Open Sans", "Noto Sans", sans-serif; }
.defs { position: absolute; }
.report { zoom: 0.93388; width: 4386px; height: 3211px; overflow: hidden; }
.columns { display: grid; grid-template-columns: 2096px 2290px; }
.vi { display: flex; flex-direction: column; align-items: flex-start; }
.drawing { display: block; }

/* Section titles */
.title { margin: 0; font-weight: 400; height: 34px; }
.title svg { display: block; }
.title text { font: italic 17.5px Lato, "Open Sans", sans-serif; white-space: pre; }
.title.first { margin-top: 14.7px; }
.title.second { margin-top: 40.3px; }
.title.third { margin-top: 34.7px; }

/* Front panel */
.panel { position: relative; width: 1016.7px; height: 723px; margin-left: 25px; background: #b3b3b3; overflow: hidden; letter-spacing: -0.42px; word-spacing: .9px; }
.lab, .cap-t { display: block; white-space: nowrap; }
.obj, .registers, .array, .error { position: absolute; }
.obj-in-p { left: 9px; top: 1.5px; }
.obj-out-p { left: 693px; top: 1.5px; }
.cap-t { color: #7c7c7c; padding-left: 3px; line-height: 14px; }
.cube { display: block; }
.cube path, .cube rect { stroke: #8a8a8a; stroke-width: 1.3; }
.cube .cube-top { fill: #a9a9a9; }
.cube .cube-side { fill: #9c9c9c; }
.cube .cube-face { fill: #bdbdbd; }
.cube .cube-in { fill: #b9b9b9; stroke: #d2d2d2; }
.cube text { font: bold 31px "Open Sans", sans-serif; fill: #d6d6d6; }
.registers { left: 9.5px; top: 93px; width: 540px; }
.registers > .lab, .error > .lab { padding-left: 1px; }
.listbox { display: flex; margin-top: 3.5px; height: 180px; border: 1px solid #828790; background: #fff; padding: 1px; }
.rows { flex: 1; overflow: hidden; }
.row { display: grid; grid-template-columns: 225px 1fr; height: 18.05px; border-bottom: 1px solid #ececec; }
.row span { padding-left: 4.5px; line-height: 16px; white-space: nowrap; }
.row span + span { border-left: 1px solid #ececec; }
.row.head { background: #efefef; }
.scroll { width: 17px; background: #f0f0f0; display: flex; flex-direction: column; align-items: center; padding: 8px 0 6px; }
.scroll svg:last-child { margin-top: auto; }
.scroll path { fill: none; stroke: #505050; stroke-width: 1.6; }
.scroll .thumb { width: 17px; height: 39px; margin-top: 4px; background: #cdcdcd; }
.buttons { display: flex; justify-content: flex-end; gap: 12.5px; margin: 8px 6px 0 0; }
.btn { width: 127px; height: 27px; border: 1px solid #adadad; background: #e1e1e1; text-align: center; line-height: 25px; }
.off-btn { background: #c0c0c0; border-color: #adadad; color: #7a7a7a; }

.array { top: 335.5px; }
.guids { left: 1px; }
.names { left: 348.5px; }
.array > .lab { padding-left: 41px; }
.arr { display: flex; align-items: flex-start; }
.spin { width: 13px; height: 27px; border-radius: 7px; border: 1px solid #6e6e6e; background: linear-gradient(90deg, #ddd, #999); position: relative; }
.spin::before { content: ""; position: absolute; inset: 12px 0 auto; border-top: 1px solid #666; }
.num { width: 22.5px; height: 20px; margin: 3px 0 0 1.5px; background: #fff; border: solid #9a9a9a; border-width: 1px 0 0 1px; padding-left: 3px; line-height: 19px; }
.arr .cells { margin-left: 3px; width: 280px; height: 207px; border: solid; border-width: 4px; border-color: #8f8f8f #c2c2c2 #c2c2c2 #8f8f8f; display: grid; grid-auto-rows: 1fr; }
.names .cells { width: 220px; }
.cells i { background: #bebebe; border: 4px solid; border-color: #989898 #b4b4b4 #bcbcbc #a2a2a2; }

.err-in-p { left: 9px; top: 575px; width: 132.5px; }
.err-out-p { left: 640px; top: 582px; width: 377px; }
.cluster { margin-top: 1.5px; height: 121px; border: 4px solid; border-color: #8f8f8f #c2c2c2 #c2c2c2 #8f8f8f; padding: 3.5px 2px 0; }
.pair { display: flex; gap: 5px; }
.led { display: block; width: 19px; height: 18px; margin: 3px 0 0 7px; background: #d5d5d5; border: 1px solid; border-color: #eee #777 #777 #eee; padding: 1px 2px; }
.led svg { display: block; }
.led path { fill: none; stroke: #0b0; stroke-width: 3; }
.code > .lab { padding-left: 13px; }
.numrow { display: flex; align-items: center; margin-top: -1px; }
.numrow .spin { height: 25px; }
.radix { width: 8px; height: 20px; background: #888; color: #ddd; font-size: 10px; line-height: 20px; text-align: center; margin-left: 1px; }
.numrow .num { width: 66px; margin: 0; border: 0; padding-left: 1px; }
.src { padding: 5.5px 0 0 1px; }
.area { height: 48px; margin-top: 3px; background: #fff; border: 3px solid; border-color: #8f8f8f #c2c2c2 #c2c2c2 #8f8f8f; display: flex; justify-content: flex-end; }
.area .scroll { padding: 7px 0 4px; }
.err-out-p .cluster { border-right-width: 1px; }
.err-out-p .code > .lab { padding-left: 11px; }
.err-out-p .numrow { margin: 1px 0 0 11px; border: 3px solid; border-color: #8f8f8f #c2c2c2 #c2c2c2 #8f8f8f; }
.err-out-p .numrow .num { background: #d0d0d0; width: 64px; height: 18px; line-height: 18px; }
.err-out-p .radix { height: 18px; margin: 0; }
.err-out-p .src { padding-top: 4.5px; }
.err-out-p .area { background: #d2d2d2; height: 51px; }

/* Diagram text */
.t { font: 12px "Open Sans", "Noto Sans", sans-serif; }
.t.b { font-weight: 700; }
text.bl.b { font: bold 12px "Open Sans", sans-serif; }
.mono { font: bold 9px "DejaVu Sans Mono", "Liberation Mono", monospace; }
.px { font: 7.5px "Liberation Sans", sans-serif; }
.qmark { font: bold 33px "Open Sans", sans-serif; fill: #999; }
.wh { fill: #fff; }
.dim { fill: #aaa; }
.faint { fill: #999; }
.bl { fill: #00f; color: #00f; }
.gr { fill: #008000; }
.te { fill: #008080; }

/* Fills */
.ink { fill: #000; }
.off { fill: #999; }
.dark { fill: #444; }
.white { fill: #fff; }
.mg { fill: #f0f; }
.navy { fill: #000080; }
.olive { fill: #808000; }
.red { fill: #f00; }
.salmon { fill: #ff9999; }
.blue-fill { fill: #00f; }
.teal-fill { fill: #008080; }
.sky { fill: #aee6ff; }
.globe { fill: #18c8f0; stroke: #000; }
.earth { fill: #1c6fc4; }
.land { fill: #4fc04a; }
.veil { fill: rgba(90, 90, 90, .4); }
.tf-veil { fill: rgba(100, 170, 100, .6); }
.i-veil { fill: rgba(140, 140, 255, .6); }
.mg-veil { fill: #ff99ff; }

/* Boxes */
.box { fill: #fff; stroke: #000; }
.grey-edge { stroke: #999; }
.olive-edge { stroke: #50503c; }
.cap { fill: #ffc; }
.node { fill: #ffc; stroke: #50503c; }
.note { fill: #ffffd5; stroke: #000; }
.faded { fill: #ffffee; stroke: #999; }
.gconst { fill: #fff; stroke: #f0f; stroke-width: 2; }
.abc, .s-out { fill: #fff; stroke: #f0f; stroke-width: 1.2; }
.s-dim { fill: #ff99ff; stroke: #f0f; }
.lbox { fill: #ffffd5; stroke: #00f; stroke-width: 2; }
.lbox.white { fill: #fff; }
.refbox { fill: #ffc; stroke: #00f; stroke-width: 2; }
.gr-edge { stroke: #008000; stroke-width: 2.3; }
.ref-arrow { fill: none; stroke: #000; stroke-width: 2; }
.tf { fill: #fff; stroke: #008000; stroke-width: 2; }
.tf-in { fill: #fff; stroke: #008000; }
.obj-box { fill: #fff; stroke: #000; stroke-width: 2; }
.obj-in { fill: #fff; stroke: #000; }
.err-box { fill: #fff; stroke: #808000; stroke-width: 2; }
.err-in { fill: #fff; stroke: #808000; }
.ring { fill: #fff; stroke: #00f; }
.ring-shadow { fill: none; stroke: #00f; }
.hdr-grey { fill: #ccc; stroke: #000; }
.hdr-plain { fill: #ccc; }
.hdr-green { fill: #00f000; stroke: #000; }
.hdr-mint { fill: #99ff99; stroke: #000; }
.hdr-blue { fill: #3399ff; stroke: #000; }
.tunnel { stroke: #444430; }
.tun { fill: #ffffd5; stroke: #50503c; }
.mgs { --t: #f0f; }
.tun-in { fill: none; stroke: var(--t, #00f); }
.shift { fill: #ffc; stroke: #808000; stroke-width: 1.6; }
.a-out { fill: #fff; stroke: #00f; stroke-width: 1.2; }
.a-band { fill: #00f; }
.a-dim { fill: #fff; stroke: #99f; stroke-width: 3; }
.a-dimband { fill: #99f; }
.st { fill: #fff; stroke: var(--s, #00f); stroke-width: .8; }
.stp { fill: var(--s, #00f); }
.pink-step { --s: #f0f; }
.frame { fill: none; stroke: #808080; stroke-dasharray: 2 2; }
.off-frame { stroke: #999; stroke-dasharray: none; }

/* Strokes and wires */
.ink-line { fill: none; stroke: #000; }
.navy-line { fill: none; stroke: #000080; stroke-width: 1.2; }
.x-edge { stroke: #000; stroke-width: 4; stroke-dasharray: 2 1; }
.x-red { stroke: #f00; stroke-width: 2.2; }
.spark { stroke: #e0c000; fill: none; }
.lens { fill: #eef; stroke: #999; stroke-width: 1.5; }
.handle { stroke: #999; stroke-width: 2.5; }
.gap { fill: none; stroke: #fff; stroke-width: 7; }
.blue { fill: none; stroke: #00f; }
.thick { stroke-width: 2; }
.teal { fill: none; stroke: #008080; }
.dash { fill: none; stroke: #000; stroke-dasharray: 4 3; }
.lead { fill: none; stroke: #000; stroke-width: 1.5; marker-end: url(#head); }
.w-class { fill: none; stroke: url(#stripe); stroke-width: 3; }
.w-fine { fill: none; stroke: url(#stripe-fine); stroke-width: 3; }
.w-offclass { fill: none; stroke: url(#stripe-off); stroke-width: 3; }
path.w-err { fill: none; stroke: var(--w, #808000); stroke-width: var(--n, 3px); stroke-dasharray: var(--d, none); }
path.w-clu { fill: none; stroke: var(--w, #f0f); stroke-width: var(--n, 3.6px); stroke-dasharray: var(--d, none); }
path.w-arr { fill: none; stroke: var(--w, #f0f); stroke-width: var(--n, 3.4px); stroke-dasharray: var(--d, none); }
path.w-off { fill: none; stroke: var(--w, #d2d28c); stroke-width: var(--n, 3px); stroke-dasharray: var(--d, none); }
.over-err { --w: #ffff33; --n: 1px; --d: 2 2; }
.over-clu { --w: #fff; --n: 1px; --d: 3 2; }
.over-arr { --w: #fff; --n: 1.3px; --d: 1.5 1.5; }
.over-off { --w: #99994d; --n: 1px; --d: 2 2; }
.str { fill: none; stroke: #f0f; stroke-width: 2; stroke-dasharray: 1.5 .7; }
.mgc { fill: #f0f; }
.off-obj { stroke: #bccabc; stroke-width: 3; }
.off-core { stroke: #d4dcd4; stroke-width: 1; }
.skip-edge { fill: #fff; stroke: #99f; }
.skip-hdr { fill: #99f; }
.skip-play { fill: #a8d0ff; stroke: #c4dcf4; }
.skip-bar { stroke: #a8b8dc; stroke-width: 1.5; }
.half { opacity: .4; }

/* Change list */
.differences { margin: 9.5px 0 0; font: 13px/17px Lato, "Open Sans", sans-serif; letter-spacing: -0.14px; white-space: pre; padding-left: .5px; }
.differences .l1, .differences .l2 { display: inline-block; vertical-align: top; }
.l1 { margin-left: 15px; }
.l2 { margin-left: 30px; }
```
